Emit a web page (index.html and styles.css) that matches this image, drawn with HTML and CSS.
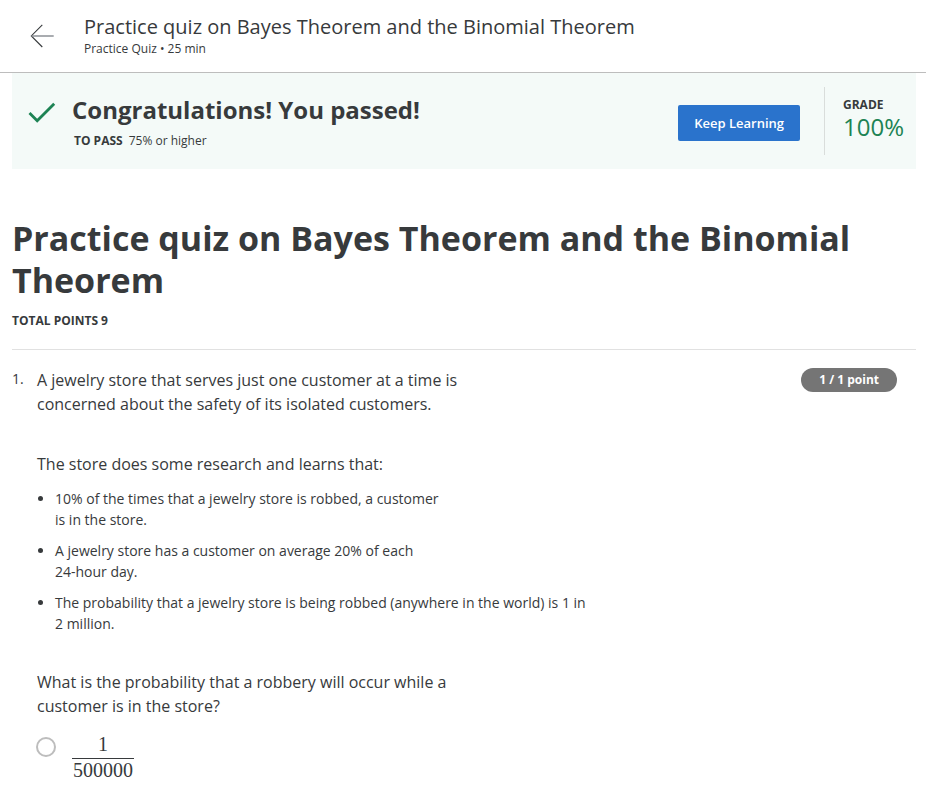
FILE: index.html
```html
<!DOCTYPE html>
<html lang="en">
<head>
<meta charset="utf-8">
<meta name="viewport" content="width=device-width, initial-scale=1">
<title>Practice quiz on Bayes Theorem and the Binomial Theorem</title>
<link rel="stylesheet" href="styles.css">
</head>
<body>
<header class="topbar">
  <a class="back" href="#" aria-label="Back">
    <svg width="24" height="24" viewBox="0 0 24 24" fill="none" stroke="currentColor"><path stroke-width="1.1" d="M12.300 .8 1.300 11.900 12.300 23"/><path stroke="#8c9196" stroke-width="1.5" d="M1.500 12H23.700"/></svg>
  </a>
  <div>
    <div class="topbar-title">Practice quiz on Bayes Theorem and the Binomial Theorem</div>
    <div class="topbar-meta">Practice Quiz • 25 min</div>
  </div>
</header>
<main class="page">
  <section class="banner">
    <svg class="check" width="28" height="22" viewBox="0 0 28 22" fill="none" stroke="currentColor" stroke-width="2.800"><path d="M1.500 11 9.200 18.700 26.200 1.700"/></svg>
    <div class="banner-text">
      <h2>Congratulations! You passed!</h2>
      <p><strong>TO PASS</strong>75% or higher</p>
    </div>
    <button class="keep" type="button">Keep Learning</button>
    <div class="grade">
      <div class="grade-label">GRADE</div>
      <div class="grade-value">100%</div>
    </div>
  </section>
  <h1>Practice quiz on Bayes Theorem and the Binomial Theorem</h1>
  <div class="total">TOTAL POINTS 9</div>
  <section class="question">
    <div class="number">1.</div>
    <div class="body">
      <p class="prompt">A jewelry store that serves just one customer at a time is concerned about the safety of its isolated customers.</p>
      <p class="prompt research">The store does some research and learns that:</p>
      <ul>
        <li>10% of the times that a jewelry store is robbed, a customer<br>is in the store.</li>
        <li>A jewelry store has a customer on average 20% of each<br>24-hour day.</li>
        <li>The probability that a jewelry store is being robbed (anywhere in the world) is 1 in<br>2 million.</li>
      </ul>
      <p class="prompt">What is the probability that a robbery will occur while a customer is in the store?</p>
      <label class="option">
        <input type="radio" name="answer">
        <span class="fraction"><span class="numerator">1</span><span class="denominator">500000</span></span>
      </label>
    </div>
    <div class="points">1 / 1 point</div>
  </section>
</main>
</body>
</html>
```
FILE: styles.css
```css
* { box-sizing: border-box; }
body { margin: 0; background: #fff; color: #373a3c; font-family: "Open Sans", sans-serif; font-size: 14px; line-height: 21px; }
h1, h2, p, ul { margin: 0; padding: 0; }
.topbar { display: flex; align-items: center; gap: 30px; padding: 14px 30px 15px; border-bottom: 1px solid #bdbdbd; }
.back { display: flex; color: #373a3c; }
.topbar-title { font-size: 20px; line-height: 26px; }
.topbar-meta { font-size: 12px; line-height: 17px; }
.page { padding: 0 10px 0 12px; }
.banner { display: flex; align-items: center; min-height: 96px; padding: 0 12px 0 16px; background: #f4faf8; }
.check { color: #1d8354; margin-right: 16px; margin-bottom: 16px; }
.banner-text { flex: 1; }
.banner h2 { font-size: 24px; line-height: 36px; }
.banner p { padding-left: 2px; margin-top: 4px; font-size: 12px; line-height: 18px; }
.banner strong { margin-right: 6px; }
.keep { height: 36px; margin-top: 4px; padding: 0 16px; border: 0; border-radius: 2px; background: #2a73cc; color: #fff; font: 600 13px "Open Sans", sans-serif; }
.grade { margin-left: 24px; padding: 10px 0 14px 18px; border-left: 1px solid #d9dddb; }
.grade-label { font-size: 12px; line-height: 16px; font-weight: 700; }
.grade-value { font-size: 24px; line-height: 28px; color: #1d8354; }
h1 { margin-top: 48px; font-size: 34px; line-height: 42px; }
.total { margin-top: 11px; padding-bottom: 19px; border-bottom: 1px solid #e1e1e1; font-size: 12px; line-height: 18px; font-weight: 700; }
.question { display: flex; align-items: flex-start; padding: 18px 19px 8px 0; }
.number { width: 25px; flex: none; }
.body { flex: 1; }
.prompt { max-width: 440px; font-size: 16px; line-height: 24px; }
.research { margin-top: 36px; }
ul { margin: 12px 0 36px; padding-left: 18px; }
li + li { margin-top: 10px; }
.option { display: flex; align-items: flex-start; gap: 16px; margin-top: 15px; }
.option input { appearance: none; width: 20px; height: 20px; margin: 4px 0 0 -1px; border: 2px solid #bdbdbd; border-radius: 50%; }
.fraction { display: flex; flex-direction: column; text-align: center; font: 20px/22px "Liberation Serif", serif; }
.numerator { padding-bottom: 3px; border-bottom: 1px solid #373a3c; }
.denominator { padding: 0 1px; }
.points { padding: 0 18px; border-radius: 12px; background: #757575; color: #fff; font-size: 12px; line-height: 24px; font-weight: 700; }
```
